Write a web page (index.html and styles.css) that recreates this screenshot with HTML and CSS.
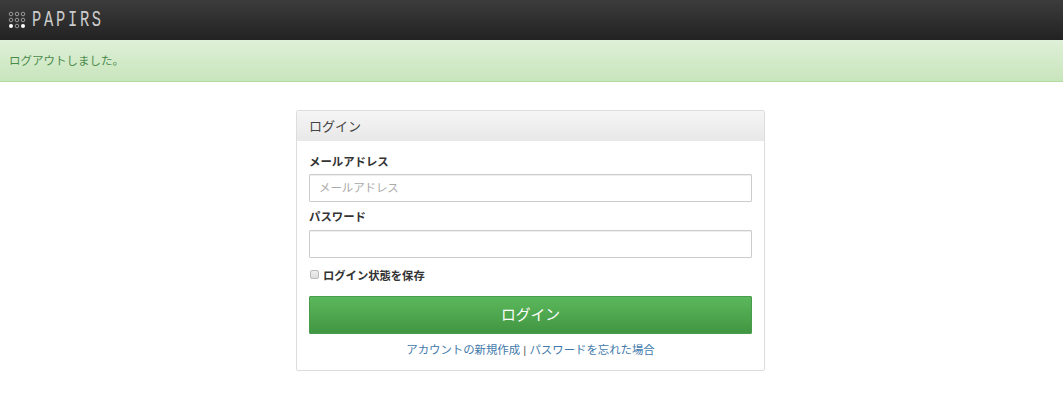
FILE: index.html
```html
<!DOCTYPE html>
<html lang="ja">
<head>
<meta charset="utf-8">
<title>PAPIRS</title>
<link rel="stylesheet" href="styles.css">
</head>
<body>
<header class="navbar">
  <svg class="logo-icon" width="18" height="18" viewBox="0 0 18 18">
    <g fill="none" stroke="#999" stroke-width="1">
      <circle cx="3" cy="3" r="1.8"/><circle cx="9" cy="3" r="1.8"/><circle cx="15" cy="3" r="1.8"/>
      <circle cx="3" cy="9" r="1.8"/><circle cx="9" cy="9" r="1.8"/><circle cx="15" cy="9" r="1.8"/>
      <circle cx="9" cy="15" r="1.8"/>
    </g>
    <circle cx="3" cy="15" r="2" fill="#fff"/><circle cx="15" cy="15" r="2" fill="#fff"/>
  </svg>
  <span class="brand">PAPIRS</span>
</header>
<div class="alert">ログアウトしました。</div>
<main class="main">
  <section class="panel">
    <div class="panel-heading">ログイン</div>
    <form class="panel-body">
      <label class="label">メールアドレス</label>
      <input class="input" type="text" placeholder="メールアドレス">
      <label class="label label-next">パスワード</label>
      <input class="input" type="password">
      <label class="check"><input class="checkbox" type="checkbox">ログイン状態を保存</label>
      <button class="btn" type="button">ログイン</button>
      <p class="links"><a href="#">アカウントの新規作成</a> | <a href="#">パスワードを忘れた場合</a></p>
    </form>
  </section>
</main>
</body>
</html>
```
FILE: styles.css
```css
* { box-sizing: border-box; }
html, body { margin: 0; padding: 0; background: #fff; }
body {
  font-family: "Liberation Sans", "Noto Sans CJK JP", sans-serif;
  font-size: 12px;
  color: #333;
  overflow: hidden;
}
.navbar {
  height: 40px;
  background: linear-gradient(to bottom, #3c3c3c, #222);
  display: flex;
  align-items: center;
  padding-left: 8px;
  gap: 6px;
}
.logo-icon { display: block; }
.brand {
  font-family: "Liberation Mono", monospace;
  font-size: 22px;
  font-weight: 400;
  letter-spacing: 3.9px;
  color: #ccc;
  transform: scaleX(0.7);
  transform-origin: left center;
}
.alert {
  height: 42px;
  padding: 0 9px 2px;
  display: flex;
  align-items: center;
  color: #4a8a4b;
  background: linear-gradient(to bottom, #dff0d8, #c8e5bc);
  border-bottom: 1px solid #b2dba1;
  font-size: 11.5px;
}
.main {
  display: flex;
  justify-content: center;
  padding-top: 28px;
  padding-right: 2px;
}
.panel {
  width: 469px;
  height: 261px;
  border: 1px solid #ddd;
  border-radius: 2px;
  box-shadow: 0 1px 1px rgba(0,0,0,.05);
}
.panel-heading {
  height: 30px;
  padding: 0 12px 2px;
  display: flex;
  align-items: center;
  font-size: 13px;
  background: linear-gradient(to bottom, #f5f5f5, #e8e8e8);
  color: #444;
}
.panel-body {
  display: flex;
  flex-direction: column;
  padding: 13px 12px 0;
}
.label {
  font-weight: 700;
  font-size: 11.4px;
  line-height: 17px;
  height: 17px;
  margin-bottom: 3px;
}
.label-next { margin-top: 7px; margin-bottom: 4px; }
.input {
  height: 28px;
  width: 100%;
  padding: 0 9px;
  font-family: inherit;
  font-size: 11.4px;
  border: 1px solid #ccc;
  border-radius: 1px;
  background: #fff;
  box-shadow: inset 0 1px 1px rgba(0,0,0,.075);
  outline: none;
}
.input::placeholder { color: #aaa; opacity: 1; }
.check {
  display: flex;
  align-items: center;
  margin-top: 8px;
  margin-bottom: 1px;
  height: 17px;
  font-weight: 700;
  font-size: 11.3px;
}
.checkbox {
  appearance: none;
  width: 9px;
  height: 9px;
  margin: 0 4px 0 1px;
  border: 1px solid #bbb;
  border-radius: 2px;
  background: linear-gradient(to bottom, #eee, #ddd);
}
.btn {
  margin-top: 12px;
  height: 38px;
  width: 100%;
  padding: 0 0 3px;
  border: 1px solid #4a9c4d;
  border-radius: 1px;
  color: #fff;
  font-family: inherit;
  font-size: 14.8px;
  background: linear-gradient(to bottom, #5cb85c, #419641);
}
.links {
  margin: 8px 0 0;
  text-align: center;
  font-size: 11.4px;
  line-height: 17px;
  color: #666;
}
.links a { color: #4279ab; text-decoration: none; }
```
